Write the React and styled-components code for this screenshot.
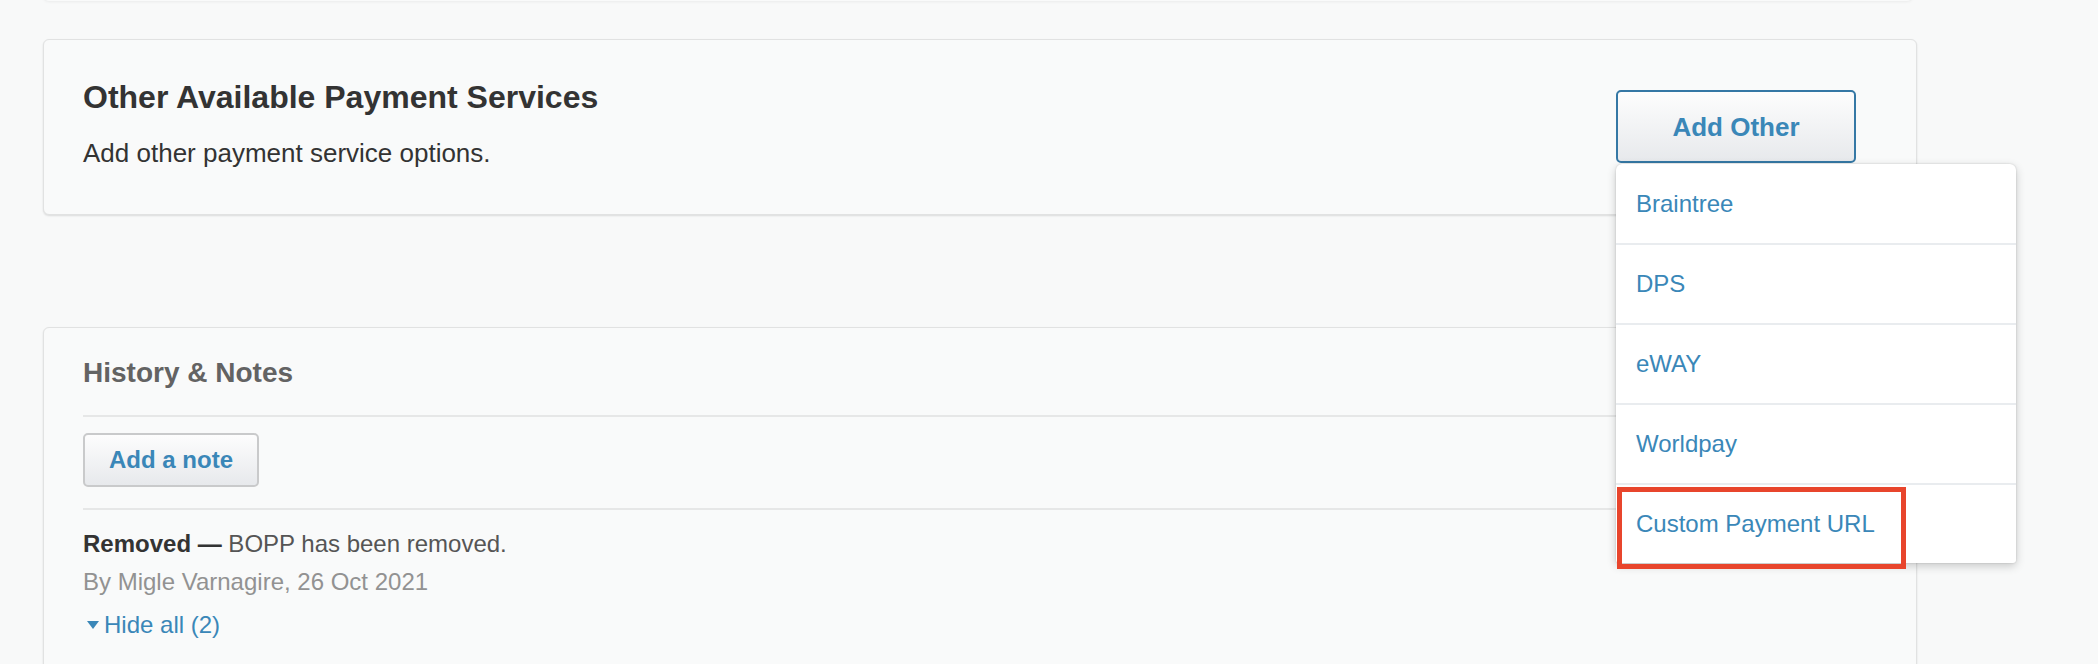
import React from "react";
import styled, { createGlobalStyle } from "styled-components";

const GlobalStyle = createGlobalStyle`
  * { box-sizing: border-box; }
  html, body {
    margin: 0;
    padding: 0;
    background: #f8f9f9;
    overflow: hidden;
  }
  body {
    font-family: "Liberation Sans", Arial, Helvetica, sans-serif;
    color: #333;
  }
`;

const Page = styled.div`
  padding: 0 181px 0 43px;
`;

const PrevCardEdge = styled.div`
  height: 10px;
  margin-top: -9px;
  margin-right: 4px;
  background: #f9fafa;
  border-radius: 0 0 6px 6px;
  box-shadow: 0 1px 3px rgba(0, 0, 0, 0.06);
`;

const Card = styled.section`
  margin-top: ${(p) => p.$gap}px;
  background: #f9fafa;
  border: 1px solid #e1e2e2;
  border-radius: 6px;
  box-shadow: 0 1px 2px rgba(0, 0, 0, 0.12);
`;

const ServiceCard = styled(Card)`
  display: flex;
  justify-content: space-between;
  align-items: flex-start;
  padding: 38px 60px 45px 39px;
`;

const ServiceText = styled.div`
  display: flex;
  flex-direction: column;
`;

const Heading = styled.h2`
  margin: 0;
  font-size: 32px;
  line-height: 38px;
  font-weight: 700;
  color: #333;
`;

const Description = styled.p`
  margin: 21px 0 0;
  font-size: 26px;
  line-height: 32px;
  color: #333;
`;

const MenuAnchor = styled.div`
  position: relative;
  margin-top: 12px;
`;

const Button = styled.button`
  display: block;
  font-family: inherit;
  font-weight: 700;
  color: #3a87b8;
  background: linear-gradient(to bottom, #fdfdfd, #e7e9ec);
  border-radius: 5px;
  cursor: pointer;
  text-align: center;
`;

const AddOtherButton = styled(Button)`
  width: 240px;
  border: 2px solid #3578a5;
  font-size: 26px;
  line-height: 30px;
  padding: 20px 0 19px;
`;

const AddNoteButton = styled(Button)`
  border: 2px solid #c9cacb;
  font-size: 24px;
  line-height: 28px;
  padding: 11px 24px;
`;

const Dropdown = styled.ul`
  position: absolute;
  top: calc(100% + 1px);
  left: 0;
  width: 400px;
  margin: 0;
  padding: 0;
  list-style: none;
  background: #fff;
  border-radius: 6px 6px 3px 3px;
  box-shadow: 0 3px 10px rgba(0, 0, 0, 0.2), 0 0 2px rgba(0, 0, 0, 0.18);
  z-index: 10;
`;

const MenuItem = styled.li`
  position: relative;
  display: flex;
  align-items: center;
  height: 79px;
  padding: 0 20px;
  font-size: 24px;
  line-height: 28px;
  color: #3a87b8;

  & + & {
    height: 80px;
    border-top: 2px solid #e9ecef;
  }
`;

const Highlight = styled.span`
  position: absolute;
  top: 2px;
  left: 1px;
  width: 289px;
  height: 82px;
  border: 5px solid #e8452c;
  pointer-events: none;
`;

const HistoryCard = styled(Card)`
  padding: 28px 40px 140px 39px;
`;

const HistoryTitle = styled.h3`
  margin: 0;
  font-size: 28px;
  line-height: 34px;
  font-weight: 700;
  color: #636363;
`;

const Divider = styled.hr`
  margin: ${(p) => p.$top}px 0 ${(p) => p.$bottom}px;
  height: 2px;
  border: none;
  background: #e6e7e7;
`;

const EntryLine = styled.div`
  font-size: 24px;
  line-height: 28px;
  color: #555;

  strong {
    color: #333;
    font-weight: 700;
  }
`;

const Meta = styled.div`
  margin-top: 10px;
  font-size: 24px;
  line-height: 28px;
  color: #929292;
`;

const ToggleRow = styled.div`
  display: flex;
`;

const Toggle = styled.a`
  margin-top: 15px;
  display: inline-flex;
  align-items: center;
  font-size: 24px;
  line-height: 28px;
  color: #3a87b8;
  cursor: pointer;
`;

const Caret = styled.span`
  width: 0;
  height: 0;
  margin: 0 5px 0 4px;
  border-left: 6px solid transparent;
  border-right: 6px solid transparent;
  border-top: 8px solid #3a87b8;
`;

const services = ["Braintree", "DPS", "eWAY", "Worldpay", "Custom Payment URL"];

export default function App() {
  return (
    <>
      <GlobalStyle />
      <Page>
        <PrevCardEdge />
        <ServiceCard $gap={38}>
          <ServiceText>
            <Heading>Other Available Payment Services</Heading>
            <Description>Add other payment service options.</Description>
          </ServiceText>
          <MenuAnchor>
            <AddOtherButton type="button">Add Other</AddOtherButton>
            <Dropdown>
              {services.map((s, i) => (
                <MenuItem key={s}>
                  {s}
                  {i === services.length - 1 && <Highlight />}
                </MenuItem>
              ))}
            </Dropdown>
          </MenuAnchor>
        </ServiceCard>

        <HistoryCard $gap={112}>
          <HistoryTitle>History &amp; Notes</HistoryTitle>
          <Divider $top={25} $bottom={16} />
          <div>
            <AddNoteButton type="button">Add a note</AddNoteButton>
          </div>
          <Divider $top={21} $bottom={20} />
          <EntryLine>
            <strong>Removed —</strong> BOPP has been removed.
          </EntryLine>
          <Meta>By Migle Varnagire, 26 Oct 2021</Meta>
          <ToggleRow>
            <Toggle>
              <Caret />
              Hide all (2)
            </Toggle>
          </ToggleRow>
        </HistoryCard>
      </Page>
    </>
  );
}
